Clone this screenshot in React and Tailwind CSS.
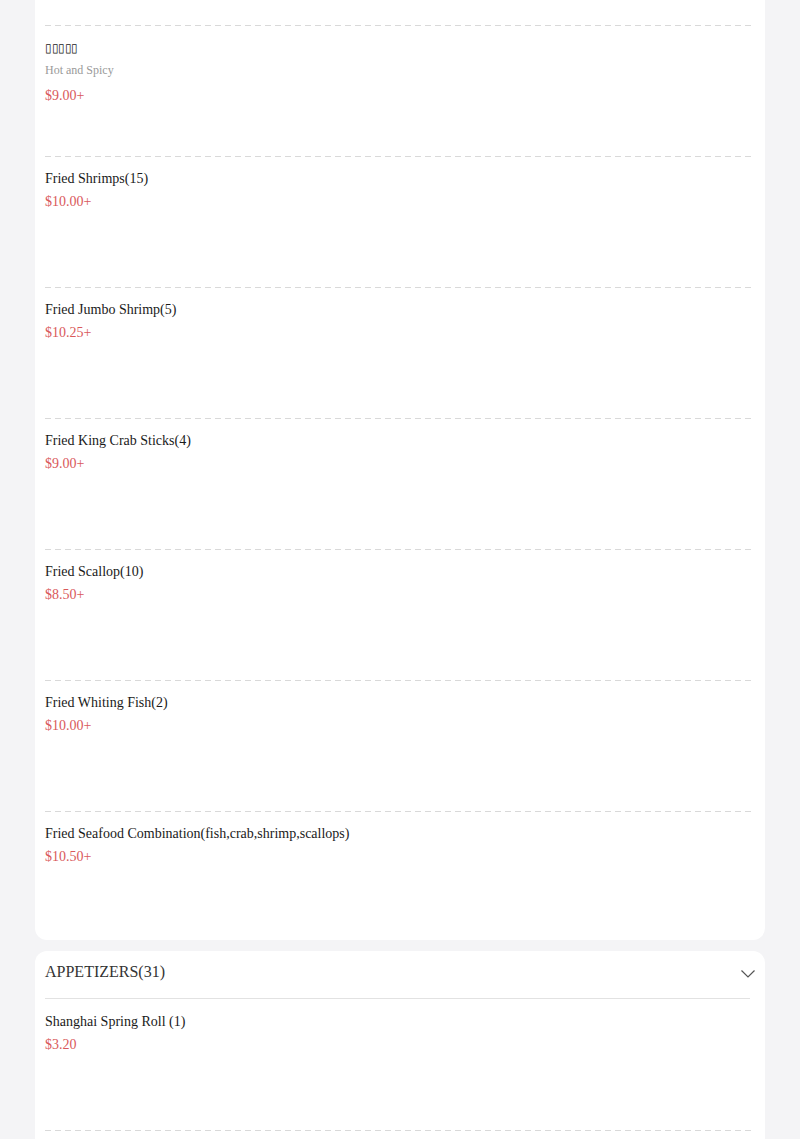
const friedItems = [
  { name: '▯▯▯▯▯', sub: 'Hot and Spicy', price: '$9.00+', tofu: true },
  { name: 'Fried Shrimps(15)', price: '$10.00+' },
  { name: 'Fried Jumbo Shrimp(5)', price: '$10.25+' },
  { name: 'Fried King Crab Sticks(4)', price: '$9.00+' },
  { name: 'Fried Scallop(10)', price: '$8.50+' },
  { name: 'Fried Whiting Fish(2)', price: '$10.00+' },
  { name: 'Fried Seafood Combination(fish,crab,shrimp,scallops)', price: '$10.50+' },
];

const appetizers = [{ name: 'Shanghai Spring Roll (1)', price: '$3.20' }];

function Dashed() {
  return (
    <div className="h-px w-full bg-[linear-gradient(to_right,#d9d9d9_60%,transparent_60%)] bg-[length:10px_1px]" />
  );
}

function Item({ item, last }) {
  return (
    <div className={last ? 'h-[128px] pt-[11px]' : 'h-[130px] pt-[11px]'}>
      {item.tofu ? (
        <p className="text-[12px] leading-[22px] tracking-[-0.5px] text-[#222]">{item.name}</p>
      ) : (
        <p className="text-[14px] leading-[22px] text-[#1a1a1a]">{item.name}</p>
      )}
      {item.sub && <p className="text-[12px] leading-[22px] text-[#9a9a9a]">{item.sub}</p>}
      <p className={`text-[14px] leading-[22px] text-[#d9595b] ${item.sub ? 'mt-[4px]' : 'mt-px'}`}>
        {item.price}
      </p>
    </div>
  );
}

export default function App() {
  return (
    <div className="min-h-[1139px] bg-[#f4f4f6] px-[35px] font-['Liberation_Serif',serif]">
      <div className="rounded-b-xl bg-white px-[10px]">
        <div className="h-[25px]" />
        {friedItems.map((item, i) => (
          <div key={item.name}>
            <Dashed />
            <Item item={item} last={i === friedItems.length - 1} />
          </div>
        ))}
      </div>

      <div className="mt-[11px] rounded-t-xl bg-white pl-[10px] pr-[10px]">
        <div className="mr-[5px] flex h-[48px] items-start justify-between border-b border-[#e2e2e2] pt-[9px]">
          <span className="text-[16px] leading-6 text-[#333]">APPETIZERS(31)</span>
          <svg width="16" height="10" viewBox="0 0 16 10" className="mr-[-6px] mt-[9px]" fill="none">
            <polyline points="1.5,1.5 8,8 14.5,1.5" stroke="#555" strokeWidth="1.2" />
          </svg>
        </div>
        {appetizers.map((item) => (
          <div key={item.name}>
            <div className="h-[131px] pt-[12px]">
              <p className="text-[14px] leading-[22px] text-[#1a1a1a]">{item.name}</p>
              <p className="mt-px text-[14px] leading-[22px] text-[#d9595b]">{item.price}</p>
            </div>
            <Dashed />
            <div className="h-[20px]" />
          </div>
        ))}
      </div>
    </div>
  );
}
